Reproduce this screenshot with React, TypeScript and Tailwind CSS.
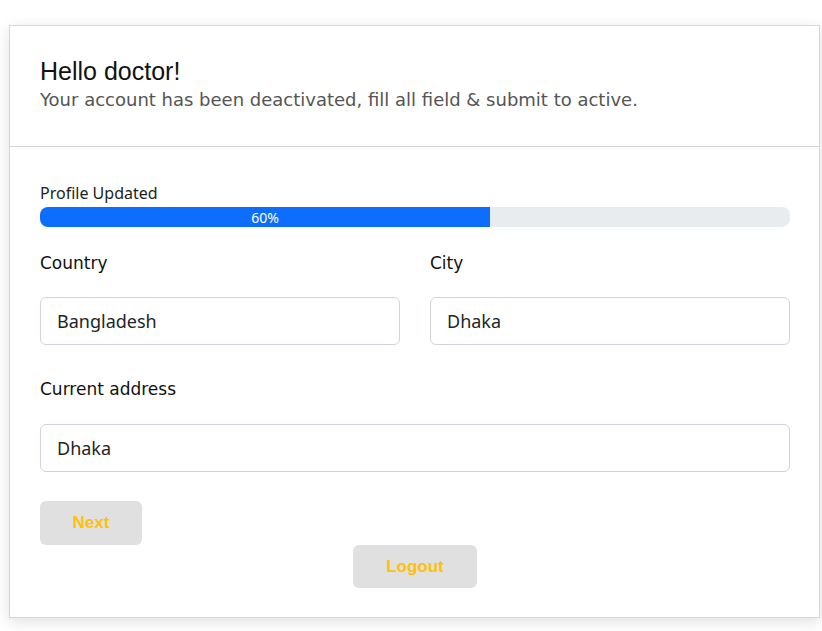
import React from "react";

const labelCls = "block font-['DejaVu_Sans',sans-serif] text-[17px] leading-[22px] text-[#111]";
const inputCls = "flex h-[48px] items-center rounded-[6px] border border-[#ced4da] px-[16px] font-['Noto_Sans',sans-serif] text-[18px] text-[#212529]";
const btnCls = "flex items-center justify-center rounded-[6px] bg-[#e0e0e0] text-[17px] font-bold text-[#ffc107]";

export default function App() {
  return (
    <div className="min-h-[631px] w-[822px] bg-white pt-[25px] pl-[9px] font-['Liberation_Sans',Arial,sans-serif]">
      <div className="w-[811px] border border-[#d6d6d6] bg-white shadow-[0_4px_14px_rgba(0,0,0,0.12)]">
        <div className="border-b border-[#d6d6d6] pl-[30px] pr-[29px] pt-[32px] pb-[33px]">
          <h1 className="text-[25px] leading-[26px] text-[#111]">Hello doctor!</h1>
          <p className="mt-[3px] font-['DejaVu_Sans',sans-serif] text-[18px] leading-[26px] text-[#555]">
            Your account has been deactivated, fill all field &amp; submit to active.
          </p>
        </div>
        <div className="pl-[30px] pr-[29px] pt-[36px] pb-[29px]">
          <div className="font-['Noto_Sans',sans-serif] text-[16px] leading-[20px] text-[#222]">Profile Updated</div>
          <div className="mt-[4px] h-[20px] w-full overflow-hidden rounded-[8px] bg-[#e9ecef]">
            <div className="flex h-full w-[60%] items-center justify-center bg-[#0d6efd] font-['Noto_Sans',sans-serif] text-[14px] text-white">
              60%
            </div>
          </div>
          <div className="mt-[25px] grid grid-cols-2 gap-x-[30px]">
            <div className="flex flex-col gap-[23px]">
              <label className={labelCls}>Country</label>
              <div className={inputCls}>Bangladesh</div>
            </div>
            <div className="flex flex-col gap-[23px]">
              <label className={labelCls}>City</label>
              <div className={inputCls}>Dhaka</div>
            </div>
          </div>
          <div className="mt-[33px] flex flex-col gap-[24px]">
            <label className={labelCls}>Current address</label>
            <div className={inputCls}>Dhaka</div>
          </div>
          <button className={"mt-[29px] h-[44px] w-[102px] " + btnCls}>Next</button>
          <div className="flex justify-center">
            <button className={"h-[43px] w-[124px] " + btnCls}>Logout</button>
          </div>
        </div>
      </div>
    </div>
  );
}
